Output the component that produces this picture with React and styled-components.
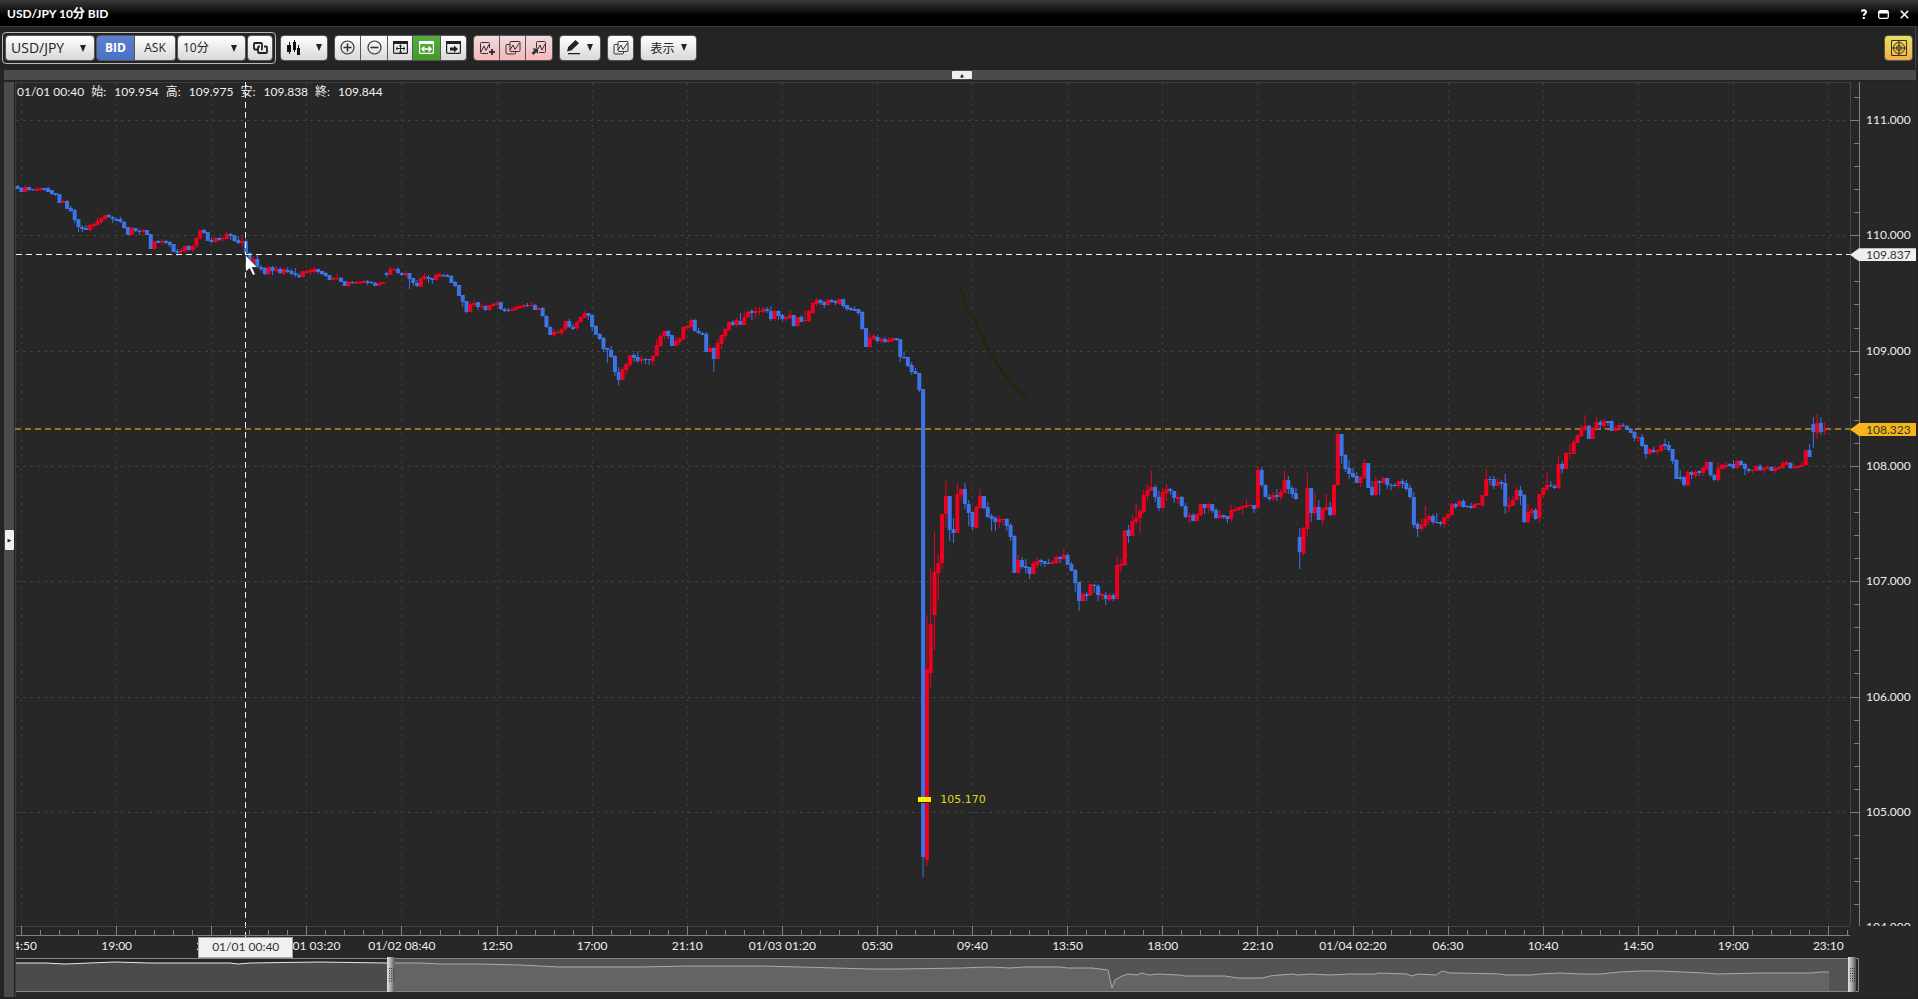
import { useState } from 'react';
import styled, { createGlobalStyle, css } from 'styled-components';

const UP = '#f00020';
const DOWN = '#3c74e8';

// chart space
const LEFT = 16;
const TOP = 82;
const WIDTH = 1834;
const HEIGHT = 844;
const FIRST_TICK = 21;
const STEP = 3.8046;
const GRID_STEP = STEP * 25;
const PRICE_TOP = 120;
const PRICE_STEP = 115.3;

// each bar: colour, high, body top, body bottom, low (counted down from y, in units of k)
const sessions = [
  {
    start: -1, y: 180, k: 1 / 3, bars: `
b15 18 26 28,b22 25 36 36,r18 20 36 36,b20 20 30 32,b26 27 31 33,r20 28 32 34,r24 25 31 33,b24 25 29 32,
b22 25 35 36,b30 31 42 44,b38 39 45 48,b42 43 69 69,r60 62 68 70,b60 62 87 88,b78 84 92 97,b88 90 120 130,
b118 118 140 155,b135 140 146 155,b136 143 150 151,r133 135 150 152,r129 132 138 145,r114 124 134 138,
r110 113 126 132,r104 106 117 120,b102 105 112 114,b108 112 118 128,b113 116 122 124,b112 117 127 130,
b124 126 145 146,b142 142 165 165,r142 143 165 165,b143 144 154 156,b146 153 157 164,r148 150 156 160,
b150 151 165 166,b162 163 207 208,r183 183 207 210,b180 183 188 190,r178 183 187 194,b181 184 190 192,
b184 187 196 200,b192 193 215 217,b208 213 218 228,r205 209 217 222,r196 198 212 220,b196 198 210 214,
r195 199 211 216,r172 173 199 204,r150 151 175 180,b148 151 160 162,b155 157 183 184,b175 180 186 188,
r170 174 186 188,b170 173 179 182,r170 173 178 182,r156 161 176 178,b160 162 168 180,b164 166 184 186,
b168 180 190 192,r168 184 190 202,b178 182 220 222,b216 220 240 262,r228 236 248 260,b225 236 262 265,
b255 260 266 272,b262 265 282 284,r258 260 282 284,b258 260 272 285,r258 267 272 276,b262 268 280 282,
r264 268 282 284,b262 269 276 278,b268 273 281 284,b264 279 286 290,b280 286 292 293,r272 273 292 293,
r270 272 278 280,r264 270 276 286,r260 266 276 278,b266 268 276 282,b272 274 283 285,b276 280 288 290,
b286 286 299 300,r290 294 300 302,r282 293 297 300,b290 294 305 306,b302 304 317 318,r303 305 317 320,
b302 305 310 312,r304 306 311 312,r302 305 310 312,r299 302 309 310,b300 303 308 314,b304 305 310 312,
b306 308 317 319,r308 310 317 319,r305 306 311 312,b275 280 285 291,r262 268 284 286,r265 267 271 272,
b262 267 280 282,b276 280 285 288,r273 278 284 290,b278 280 297 326,b294 295 310 318,b300 308 318 320,
r292 293 320 320,r278 288 296 300,b285 290 297 308,b294 295 300 312,r280 286 300 302,r280 283 290 292,
b282 284 288 292,b282 286 291 292,b284 287 308 309,b304 306 318 320,b314 315 347 347,b345 346 366 382,
b362 363 396 398,r366 372 396 397,r360 369 375 380,b366 367 380 390,r368 378 382 386,b375 377 390 392,
r374 374 390 392,r368 373 378 380,r366 370 376 378,b365 366 388 390,b385 387 392 396`,
  },
  {
    start: 128, y: 260, k: 1 / 3, bars: `
b144 149 153 156,r142 146 153 154,r138 141 149 150,r137 139 145 146,r132 135 142 146,b130 134 139 141,
r126 134 139 141,b133 135 149 150,r141 144 150 151,b141 143 169 171,b166 168 202 204,b199 201 225 226,
r208 216 225 230,r210 215 219 220,r204 207 219 225,r182 184 207 214,b178 184 202 204,b192 201 206 210,
r183 185 203 209,r168 171 186 190,r154 159 174 175,b158 160 168 179,b163 165 200 214,b194 198 224 226,
b220 222 236 240,b232 234 266 275,b264 265 270 308,b258 269 291 294,b284 289 337 347,b320 335 360 375,
r320 327 360 364,r305 312 330 345,r285 286 315 320,b280 286 294 306,b272 291 302 308,r288 296 302 312,
b294 296 300 312,b296 297 301 315,r285 287 302 314,r238 256 287 288,r222 228 258 260,r213 214 228 236,
b210 214 228 238,b225 226 257 258,r230 243 257 258,r234 235 246 254,r198 201 238 240,r195 199 204 206,
r174 180 202 208,b178 180 214 216,b204 213 218 222,b216 218 224 226,b216 222 275 277,r254 264 275 277,
b262 263 297 336,r238 249 297 298,r222 224 252 268,r204 206 228 236,r184 186 210 214,b180 186 194 198,
r174 180 194 201,b160 182 194 196,r154 170 194 196,r150 155 172 174,b148 154 159 180,r141 154 159 174,
r142 152 156 164,r141 146 156 160,b142 147 154 158,b138 152 178 182,r150 153 178 182,b150 153 167 180,
b162 165 178 182,r168 171 178 182,r150 165 174 176,b164 165 198 200,r171 171 198 202,b164 171 186 186,
r150 180 184 186,r150 154 184 186,r126 129 158 162,r114 120 132 138,b116 120 130 134,b124 126 134 144,
r118 120 136 138,b116 121 126 130,b120 124 130 134,r117 118 132 134,b116 118 138 144,b134 136 147 152,
b142 144 150 152,b138 147 152 154,b146 148 158 166,b154 156 206 210,b204 205 261 262,r220 234 261 262,
r222 228 236 240,b226 230 243 246,r232 237 243 250,b230 238 245 248,r232 240 246 248,r233 234 243 246,
b233 235 240 242,b237 238 292 307,b276 290 294 296,b290 291 317 320,b305 315 336 344,b324 332 341 342,
b338 340 389 396`,
  },
  {
    start: 237, y: 280, k: 1 / 2.529, bars: `
b275 275 1458 1511,r848 985 1467 1481,r728 870 995 1034,r637 738 846 936,r692 715 741 813,r592 592 716 731,
r508 546 592 624,b545 546 631 660,b602 630 640 665,r513 541 640 641,r529 529 543 558,b513 529 567 578,
b556 566 590 622,b586 587 625 632,r570 574 626 628,r529 546 577 578,b545 546 577 578,b561 574 600 602,
b592 598 604 634,b598 602 611 636,r597 605 612 627,r602 604 608 620,b603 604 622 634,b614 620 650 660,
b644 647 741 742,r695 709 741 743,b700 709 725 732,b706 724 728 740,b726 727 743 756,r710 716 743 744,
r702 710 721 728,b706 709 714 724,b710 711 717 726,b706 715 718 719,r708 714 718 719,r696 700 716 718,
b698 700 706 716,r678 696 706 707,b694 696 720 722,b714 718 736 737,b732 734 766 788,b763 765 813 837,
r788 795 813 814,b790 794 798 812,r769 770 797 798,b770 771 774 792,b769 773 797 812,r792 795 798 810,
b789 796 808 822,r792 796 809 812,b792 796 808 812,r701 722 808 809,r706 719 724 738,r632 635 722 724,
b619 632 647 664,r594 610 647 648,r567 601 612 619,r580 585 603 640,r532 544 587 591,r515 531 545 560,
r482 524 533 534,b518 524 549 561,b533 548 577 583,r527 537 577 578`,
  },
  {
    start: 301, y: 400, k: 1 / 3, bars: `
r252 268 278 303,b264 268 274 284,b272 273 294 309,r282 291 297 312,b288 291 318 320,b310 318 351 354,
r339 345 351 370,b339 345 363 364,r338 342 363 364,r311 312 345 347,b312 313 324 342,r310 313 324 338,
b312 313 333 338,b325 331 353 356,r330 346 354 358,b344 346 351 358,b347 349 357 368,r314 329 357 365,
r321 327 333 335,r320 322 329 333,r318 319 324 342,r298 315 321 323,r309 315 319 321,b315 316 326 340,
r199 210 325 326,b202 210 256 262,b252 255 291 292,b282 290 297 304,r276 285 297 302,b267 285 292 303,
r267 276 292 299,r210 240 279 280,b228 240 267 283,b258 264 282 294,b264 279 297 299,b384 410 457 508,
r382 384 458 468,r219 264 387 412,b263 264 339 365,r280 321 340 348,b299 321 360 361,r321 327 360 375,
r282 321 330 331,b306 321 345 348,r252 255 346 347,r93 102 256 259,b101 102 167 192,b162 165 206 216,
b180 204 222 237,b204 218 231 233,b216 228 248 250,r228 231 248 260,r176 189 234 236,b188 189 263 264,
b243 262 286 288,r231 244 286 288,b240 243 249 284,r231 234 250 251,b233 234 256 268,b249 255 259 270,
b249 255 259 261,r242 244 258 267,b237 243 252 264,b240 250 266 273,b255 264 292 297,b276 290 374 384,
b366 372 388 410,r358 375 388 394,r318 357 378 384,r342 347 360 375,b341 347 366 372,b339 365 369 370,
b363 366 372 378,r350 352 372 384,r339 342 354 362,r309 312 345 348,b310 311 321 327,r300 303 318 320,
b297 303 320 323,b315 318 322 324,b309 319 324 327,r309 312 323 324,r309 310 315 316,r285 286 314 321,
r207 236 288 289,b228 236 241 256,b228 237 258 267,r234 247 258 260,b240 245 252 267,b222 249 318 342,
r291 315 320 336,r288 299 318 319,r261 270 300 303,b258 270 287 314,b282 285 365 368,r312 335 367 368,
r324 330 338 350,b324 330 356 360`,
  },
  {
    start: 399, y: 390, k: 1 / 3, bars: `
r312 313 384 398,r291 293 315 324,r246 284 297 304,b272 284 288 292,b282 287 294 297,r198 221 294 296,
b212 221 236 250,r187 188 236 238,r162 188 192 206,r150 156 191 192,r134 136 158 160,r105 117 138 140,
r75 107 120 122,b106 107 146 147,r111 113 146 147,r80 96 116 118,b90 96 104 116,r87 94 108 118,b92 93 98 108,
b90 94 122 123,r108 114 122 124,r100 104 117 119,b99 104 109 111,b105 107 118 120,b114 117 128 130,
b124 126 144 153,r138 141 146 156,b132 141 167 170,b162 165 192 206,r174 178 192 194,b171 180 186 188,
r178 180 187 195,r162 164 182 189,b147 163 168 180,b153 166 180 185,b177 178 212 222,b207 210 266 267,
b240 262 266 273,b258 261 284 290,r240 246 284 292,b243 245 256 267,r241 247 258 264,b240 244 249 258,
r228 234 250 257,r213 215 238 243,b215 216 254 260,b252 254 270 274,r216 234 270 276,r222 224 236 238,
r216 224 230 236,b219 222 228 232,b210 221 235 238,r207 214 234 236,b210 214 226 228,b220 222 238 255,
b234 236 242 250,r237 239 243 248,r226 228 242 244,b222 229 240 243,r230 233 240 250,r226 231 236 238,
b228 230 243 244,r232 234 243 248,r229 231 236 238,r213 218 234 236,r210 217 224 226,b216 218 234 236,
r222 230 235 237,r226 228 233 234,r216 224 230 231,r180 181 226 227,b163 180 200 202,b81 102 126 174,
r72 99 129 147,b81 99 126 134,r96 118 124 136`,
  },
];

const candles = sessions.flatMap(({ start, y, k, bars }) =>
  bars.trim().split(/,\s*/).map((bar, i) => {
    const [high, top, bottom, low] = bar.slice(1).split(' ').map((v) => Math.round(y + v * k));
    return { x: FIRST_TICK + 0.4 + STEP * (start + i), color: bar[0] === 'r' ? UP : DOWN, high, top, bottom, low };
  })
);

const overview =
  '16,963 45,963 65,964 115,962 150,963 200,963 230,963 238,964 250,963 320,962 387,963 420,963 440,964 480,964 ' +
  '520,965 560,967 640,967 690,966 760,966 800,967 870,969 900,969 960,968 990,967 1010,968 1025,967 1060,967 ' +
  '1068,968 1092,968 1100,969 1108,970 1112,988 1115,980 1122,976 1128,974 1137,975 1141,973 1150,975 1157,974 ' +
  '1180,975 1185,976 1225,976 1238,978 1263,978 1270,976 1280,975 1292,974 1298,975 1310,974 1330,975 1350,974 ' +
  '1376,974 1378,973 1407,974 1412,976 1418,974 1436,975 1442,971 1450,973 1460,973 1500,974 1505,975 1530,975 ' +
  '1540,974 1560,973 1580,974 1600,974 1620,972 1640,971 1660,971 1705,973 1717,974 1760,973 1812,973 1820,972 1829,972';

const times = ['14:50', '19:00', '23:10', '01/01 03:20', '01/02 08:40', '12:50', '17:00', '21:10', '01/03 01:20', '05:30',
  '09:40', '13:50', '18:00', '22:10', '01/04 02:20', '06:30', '10:40', '14:50', '19:00', '23:10'];
const prices = ['111.000', '110.000', '109.000', '108.000', '107.000', '106.000', '105.000', '104.000'];
const readout = [['始', '109.954'], ['高', '109.975'], ['安', '109.838'], ['終', '109.844']];

const range = (n) => Array.from({ length: n }, (_, i) => i);

const App = () => {
  const [side, setSide] = useState('BID');
  const [fit, setFit] = useState('width');

  return (
    <Window>
      <GlobalStyle />
      <TitleBar>
        <Title>USD/JPY 10分 BID</Title>
        <WindowButton aria-label="Help">
          <svg width="6" height="11" viewBox="1 0 6 11" fill="none" stroke="#fff" strokeWidth="2">
            <path d="M1.5 2.6C2 .6 6 .6 6 3c0 1.700-2.200 1.600-2.200 3.800M3.800 8v2" />
          </svg>
        </WindowButton>
        <WindowButton aria-label="Maximize">
          <svg width="11" height="9" viewBox="0 0 11 9">
            <rect x=".7" y=".7" width="9.600" height="7.600" rx="1.500" fill="none" stroke="#fff" strokeWidth="1.300" />
            <path d="M1 1h9v2.500H1z" fill="#fff" />
          </svg>
        </WindowButton>
        <WindowButton aria-label="Close">
          <svg width="9" height="9" viewBox="0 0 9 9" stroke="#fff" strokeWidth="1.600"><path d="M.8.8l7.400 7.400M8.200.8L.8 8.200" /></svg>
        </WindowButton>
      </TitleBar>

      <Toolbar>
        <Linked>
          <Picker $width={90} $size={14}>
            <select aria-label="Pair"><option>USD/JPY</option></select>
          </Picker>
          <Group>
            <Tool $width={39} $tone={side === 'BID' ? 'blue' : undefined} onClick={() => setSide('BID')}>BID</Tool>
            <Tool $width={41} $tone={side === 'ASK' ? 'blue' : undefined} onClick={() => setSide('ASK')}>ASK</Tool>
          </Group>
          <Picker $width={69} $size={12}>
            <select aria-label="Period"><option>10分</option></select>
          </Picker>
          <Tool $width={26} aria-label="Link charts"><LinkIcon /></Tool>
        </Linked>
        <Tool $width={48} $gap={15} aria-label="Chart type">
          <svg width="14" height="16" viewBox="0 0 14 16" fill="#111">
            <path d="M2 2h1v12H2zM0 5h4v7H0zM7 0h1v12H7zM6 2h3v8H6zM11 5h1v9h-1zM10 8h3v7h-3z" />
          </svg>
          <Arrow />
        </Tool>
        <Group>
          <Tool $width={27} aria-label="Zoom in"><ZoomIcon plus /></Tool>
          <Tool $width={27} aria-label="Zoom out"><ZoomIcon /></Tool>
          <Tool $width={25} aria-label="Fit all" onClick={() => setFit('all')} $tone={fit === 'all' ? 'green' : undefined}>
            <FrameIcon d="M3 7.500h9M7.500 4v8M4.800 5.800L3 7.500l1.800 1.700M10.200 5.800L12 7.500l-1.800 1.700M6 5.300l1.500-1.300L9 5.300M6 10.700L7.500 12 9 10.700" />
          </Tool>
          <Tool $width={28} aria-label="Fit width" onClick={() => setFit('width')} $tone={fit === 'width' ? 'green' : undefined}>
            <FrameIcon d="M3 8h9M5.500 5.500L3 8l2.500 2.500M9.500 5.500L12 8l-2.500 2.500" bold />
          </Tool>
          <Tool $width={26} aria-label="Scroll to latest"><FrameIcon arrow /></Tool>
        </Group>
        <Group>
          <Tool $width={27} $tone="pink" aria-label="Add indicator">
            <ChartIcon><path d="M10 12h6M13 9v6" strokeWidth="2" /></ChartIcon>
          </Tool>
          <Tool $width={26} $tone="pink" aria-label="Indicator list"><StackIcon /></Tool>
          <Tool $width={27} $tone="pink" aria-label="Remove indicator">
            <svg width="16" height="16" viewBox="0 0 16 16" fill="none" stroke="#333">
              <path d="M5.500 8V2.500q0-1 1-1h7q1 0 1 1v9q0 1-1 1H8" /><path d="M7 9l2-4 2 5 3-6" />
              <path d="M1.500 8.500h5.500v5.500L5.300 12.300 2.500 15 .5 13l2.700-2.800z" fill="#333" stroke="none" />
            </svg>
          </Tool>
        </Group>
        <Tool $width={42} $gap={6} aria-label="Draw">
          <svg width="14" height="15" viewBox="0 0 14 15" fill="#222">
            <path d="M0 11.500l1.200-4.500L8.500 0 12 3.300 4.600 10.300zM1 13h12v1.200H1z" />
          </svg>
          <Arrow />
        </Tool>
        <Tool $width={27} aria-label="Templates"><StackIcon /></Tool>
        <Tool $width={57} $gap={6}>表示 <Arrow /></Tool>
        <Spacer />
        <Tool $width={29} $tone="yellow" aria-label="Crosshair">
          <svg width="16" height="16" viewBox="0 0 16 16" fill="none" stroke="#3a3216">
            <path d="M.5.5h15v15H.5zM8 0v16M0 8h16" />
            <circle cx="8" cy="8" r="5.500" /><circle cx="8" cy="8" r="2.500" />
          </svg>
        </Tool>
      </Toolbar>

      <TopRail><RailButton $wide aria-label="Collapse toolbar">▲</RailButton></TopRail>

      <Body>
        <LeftRail><RailButton aria-label="Expand side panel">▶</RailButton></LeftRail>
        <Chart>
          <Plot>
            <PlotCanvas />
            <Readout>
              <span>01/01 00:40</span>
              {readout.map(([name, value]) => (
                <ReadoutItem key={name}><dt>{name}:</dt><dd>{value}</dd></ReadoutItem>
              ))}
            </Readout>
            <Note>105.170</Note>
          </Plot>
          <PriceAxis>
            <PriceTicks />
            <PriceLabels>
              {prices.map((p) => <span key={p}>{p}</span>)}
            </PriceLabels>
            <PriceTag $top={20.4} $color="#efefef">109.837</PriceTag>
            <PriceTag $top={41.1} $color="#f4b619">108.323</PriceTag>
          </PriceAxis>
          <TimeAxis>
            <TimeTicks />
            <TimeClip>
              <TimeLabels>
                {times.map((t, i) => <span key={i}>{t}</span>)}
              </TimeLabels>
            </TimeClip>
            <TimeTag>01/01 00:40</TimeTag>
          </TimeAxis>
          <Navigator><NavigatorCanvas /></Navigator>
        </Chart>
      </Body>
    </Window>
  );
};

const PlotCanvas = () => (
  <Canvas viewBox={`${LEFT} ${TOP} ${WIDTH} ${HEIGHT}`} preserveAspectRatio="none">
    <g stroke="#414141" strokeDasharray="2 5">
      {range(20).map((i) => {
        const x = Math.round(FIRST_TICK + GRID_STEP * i) + 0.5;
        return <line key={i} x1={x} x2={x} y1={TOP + 1} y2={TOP + HEIGHT} />;
      })}
      {range(7).map((i) => {
        const y = Math.round(PRICE_TOP + PRICE_STEP * i) + 0.5;
        return <line key={i} x1={LEFT} x2={LEFT + WIDTH} y1={y} y2={y} strokeDasharray="3 4" />;
      })}
    </g>
    <line x1="15" x2="1850" y1="429" y2="429" stroke="#9a731b" strokeWidth="2" strokeDasharray="6 4" />
    {candles.map((c, i) => (
      <g key={i} fill={c.color}>
        <rect x={c.x - 0.5} y={c.high} width="1" height={c.low - c.high} />
        <rect x={c.x - 2} y={c.top} width="4" height={Math.max(c.bottom - c.top, 1)} />
      </g>
    ))}
    <path d="M960 287l4 11 3 12 8 10 13 29 12 20 13 16 13 13" fill="none" stroke="#262500" strokeWidth="2" />
    <path d="M913 802h25" stroke="#2a2800" strokeWidth="2" />
    <rect x="918" y="797" width="13" height="5" fill="#ffee00" />
    <g stroke="#f2f2f2" strokeDasharray="6 4">
      <line x1="16" x2="1850" y1="254.500" y2="254.500" />
      <line x1="245.500" x2="245.500" y1="82" y2="937" />
    </g>
    <path d="M245.500 255v17l4-3.500 3.500 7 2.500-1.200-3.200-6.800h5.500z" fill="#fff" stroke="#111" strokeWidth=".7" />
  </Canvas>
);

const PriceTicks = () => (
  <PriceTickCanvas viewBox={`0 ${TOP} 10 ${HEIGHT}`} preserveAspectRatio="none">
    <path d="M.5 82v844" stroke="#444" />
    <path d="M9.500 82v844" stroke="#808080" />
    {range(36).map((i) => {
      const y = Math.round(PRICE_TOP + (PRICE_STEP / 5) * (i - 1)) + 0.5;
      return <path key={i} d={`M${(i - 1) % 5 ? 4 : 0} ${y}H9`} stroke="#808080" />;
    })}
  </PriceTickCanvas>
);

const TimeTicks = () => (
  <TimeTickCanvas viewBox={`${LEFT} 926 ${WIDTH} 10`} preserveAspectRatio="none">
    <path d="M15 926.500h1835" stroke="#444" />
    <path d="M15 935.500h1835" stroke="#808080" />
    {range(97).map((i) => {
      const x = Math.round(FIRST_TICK + (GRID_STEP / 5) * i) + 0.5;
      return <path key={i} d={`M${x} ${i % 5 ? 930 : 926}V935`} stroke="#808080" />;
    })}
  </TimeTickCanvas>
);

const Handle = ({ x }) => (
  <g>
    <rect x={x} y="957" width="8" height="35" fill="url(#grip)" />
    {range(6).map((i) => (
      <path key={i} d={`M${x + 2} ${968.5 + i * 2.5}h5`} stroke="#333" strokeDasharray="1 1" />
    ))}
  </g>
);

const NavigatorCanvas = () => (
  <Canvas viewBox="16 957 1843 36" preserveAspectRatio="none">
    <defs>
      <linearGradient id="grip">
        <stop offset="0" stopColor="#e2e2e2" /><stop offset=".45" stopColor="#aaa" /><stop offset="1" stopColor="#555" />
      </linearGradient>
    </defs>
    <polygon points={`16,992 ${overview} 1829,992`} fill="#4b4b4b" />
    <polyline points={overview} fill="none" stroke="#e8e8e8" />
    <rect x="387" y="958" width="1468" height="34" fill="#545454" />
    <svg x="387" y="957" width="1468" height="36" viewBox="387 957 1468 36">
      <polygon points={`16,992 ${overview} 1829,992`} fill="#646464" />
      <polyline points={overview} fill="none" stroke="#aaa" />
    </svg>
    <path d="M16 958.500H1858.500V991.500H16" fill="none" stroke="#858585" />
    <Handle x={387} />
    <Handle x={1848} />
  </Canvas>
);

const LinkIcon = () => (
  <svg width="15" height="12" viewBox="0 0 15 12" fill="none" stroke="#222" strokeWidth="1.800">
    <path d="M5 7.500H2q-1 0-1-1V2q0-1 1-1h6q1 0 1 1v4.500q0 1-1 1H8" />
    <path d="M7 4.500H6q-1 0-1 1V10q0 1 1 1h7q1 0 1-1V5.500q0-1-1-1h-2" />
  </svg>
);

const ZoomIcon = ({ plus }) => (
  <svg width="15" height="15" viewBox="0 0 15 15" fill="none" stroke="#333" strokeWidth="1.200">
    <circle cx="7.500" cy="7.500" r="6.500" />
    <path d={plus ? 'M3.500 7.500h8M7.500 3.500v8' : 'M3.500 7.500h8'} strokeWidth="1.600" />
  </svg>
);

const FrameIcon = ({ d, bold, arrow }) => (
  <svg width="15" height="13" viewBox="0 0 15 13" fill="none" stroke="currentColor">
    <rect x=".6" y=".6" width="13.800" height="11.800" rx="1" strokeWidth="1.200" />
    <path d="M0 0h15v3H0z" fill="currentColor" stroke="none" />
    {arrow ? <path d="M4 6.500h4V4.500L12 8l-4 3.500v-2H4z" fill="currentColor" stroke="none" /> : <path d={d} strokeWidth={bold ? 1.5 : 1} />}
  </svg>
);

const ChartIcon = ({ children }) => (
  <svg width="16" height="16" viewBox="0 0 16 16" fill="none" stroke="#333">
    <path d="M9 13.500H2.500q-1 0-1-1v-9q0-1 1-1h7q1 0 1 1V8" />
    <path d="M2 12l3-6 2 4.500 3-6" />
    {children}
  </svg>
);

const StackIcon = () => (
  <svg width="16" height="15" viewBox="0 0 16 15" fill="none" stroke="#333">
    <path d="M5 4.500H2q-1 0-1 1V13q0 1 1 1h7.500q1 0 1-1v-1" />
    <rect x="5" y="1.500" width="10" height="10" rx="1" />
    <path d="M5 10l3-5 2 4.500L14.500 3" />
  </svg>
);

const GlobalStyle = createGlobalStyle`
  * { box-sizing: border-box; }
  body {
    margin: 0;
    background: #242424;
    color: #eee;
    font-family: Lato, "Noto Sans CJK JP", sans-serif;
    font-size: 12px;
  }
`;

const Window = styled.div`
  display: flex;
  flex-direction: column;
  height: 100vh;
  min-height: 400px;
  overflow: hidden;
`;

const TitleBar = styled.header`
  display: flex;
  align-items: center;
  gap: 11px;
  height: 26px;
  padding: 2px 9px 0 7px;
  background: linear-gradient(#383838, #000 16px);
`;

const Title = styled.h1`
  flex: 1;
  margin: 0;
  font: 700 12px/16px Lato, "Noto Sans CJK JP", sans-serif;
  color: #fff;
`;

const WindowButton = styled.button`
  display: flex;
  padding: 0;
  border: 0;
  background: none;
`;

const Toolbar = styled.div`
  display: flex;
  align-items: center;
  gap: 6px;
  height: 42px;
  margin-right: 2px;
  padding: 0 2px 0 2px;
  border-top: 1px solid #383838;
  border-right: 1px solid #444;
`;

const Linked = styled.div`
  display: flex;
  gap: 1px;
  height: 32px;
  margin-right: -2px;
  padding: 2px;
  border: 1px solid #b8b8b8;
  border-radius: 4px;
`;

const face = css`
  height: 26px;
  border: 1px solid #555;
  border-radius: 4px;
  background: linear-gradient(#fff, #d8d8d8);
  color: #222;
  font-family: "Open Sans", "Noto Sans CJK JP", sans-serif;
`;

const tones = {
  blue: 'background: linear-gradient(#5c80cc, #4a70c4); color: #fff; font-weight: 700;',
  green: 'background: linear-gradient(#55ad40, #41992c); color: #fff;',
  pink: 'background: linear-gradient(#efdcdc, #f5b6bc);',
  yellow: 'background: linear-gradient(#e8e060, #f2ae48);',
};

const Tool = styled.button`
  ${face}
  display: inline-flex;
  align-items: center;
  justify-content: center;
  gap: ${(p) => p.$gap || 0}px;
  flex: none;
  width: ${(p) => p.$width}px;
  padding: 0;
  font-size: 12px;
  white-space: nowrap;
  ${(p) => tones[p.$tone]}
`;

const Group = styled.div`
  display: flex;

  ${Tool}:not(:first-child) { border-top-left-radius: 0; border-bottom-left-radius: 0; border-left-width: 0; }
  ${Tool}:not(:last-child) { border-top-right-radius: 0; border-bottom-right-radius: 0; }
`;

const Picker = styled.label`
  position: relative;

  select {
    ${face}
    appearance: none;
    width: ${(p) => p.$width}px;
    padding: 0 0 0 5px;
    font-size: ${(p) => p.$size}px;
  }

  &::after {
    content: '';
    position: absolute;
    top: 10px;
    right: 9px;
    border: solid transparent;
    border-width: 7px 3px 0;
    border-top-color: #222;
    pointer-events: none;
  }
`;

const Arrow = styled.i`
  border: solid transparent;
  border-width: 7px 3px 0;
  border-top-color: #222;
`;

const Spacer = styled.div`
  flex: 1;
`;

const TopRail = styled.div`
  display: flex;
  align-items: center;
  justify-content: center;
  height: 10px;
  margin: 2px 2px 2px 4px;
  padding-left: 4px;
  background: #4b4b4b;
`;

const RailButton = styled.button`
  display: flex;
  align-items: center;
  justify-content: center;
  width: ${(p) => (p.$wide ? 20 : 9)}px;
  height: ${(p) => (p.$wide ? 8 : 20)}px;
  padding: 0;
  border: 0;
  border-radius: 1px;
  background: #f0f0f0;
  color: #222;
  font: 5px "DejaVu Sans", sans-serif;
`;

const Body = styled.main`
  display: flex;
  flex: 1;
  gap: 1px;
  min-height: 0;
  padding: 0 2px 2px 4px;
`;

const LeftRail = styled.div`
  display: flex;
  align-items: center;
  justify-content: flex-end;
  width: 10px;
  background: #4b4b4b;
`;

const Chart = styled.section`
  display: grid;
  flex: 1;
  grid-template: minmax(0, 1fr) 31px 36px / minmax(0, 1fr) 66px;
  min-width: 0;
  padding-bottom: 4px;
  border-left: 1px solid #3c3c3c;
  background: #272727;
`;

const Canvas = styled.svg`
  display: block;
  width: 100%;
  height: 100%;
`;

const Plot = styled.div`
  position: relative;
  min-height: 0;
  box-shadow: inset 0 1px #3c3c3c;

  ${Canvas} { overflow: visible; }
`;

const Readout = styled.dl`
  position: absolute;
  top: 2px;
  left: 1px;
  display: flex;
  gap: 7px;
  margin: 0;
  line-height: 16px;
`;

const ReadoutItem = styled.div`
  display: flex;
  gap: 8px;

  dd { margin: 0; }
`;

const Note = styled.div`
  position: absolute;
  top: 84.8%;
  left: 50.4%;
  margin-top: -6px;
  color: #dfd81c;
  font: 11px/16px "DejaVu Sans", sans-serif;
`;

const PriceAxis = styled.div`
  position: relative;
  display: flex;
  min-height: 0;
`;

const PriceTickCanvas = styled.svg`
  flex: none;
  width: 10px;
  height: 100%;
`;

const PriceLabels = styled.div`
  display: flex;
  flex-direction: column;
  flex: 1;
  overflow: hidden;
  padding-left: 6px;

  span {
    display: flex;
    flex: 0 0 13.66%;
    align-items: center;
  }
  span:first-child { margin-top: -20px; }
`;

const PriceTag = styled.output`
  position: absolute;
  top: ${(p) => p.$top}%;
  left: 0;
  right: 0;
  height: 13px;
  margin-top: -6px;
  padding-left: 16px;
  background: ${(p) => p.$color};
  clip-path: polygon(0 50%, 9px 0, 100% 0, 100% 100%, 9px 100%);
  color: #333;
  line-height: 13px;
`;

const TimeAxis = styled.div`
  position: relative;
  grid-column: 1;
`;

const TimeTickCanvas = styled.svg`
  display: block;
  width: 100%;
  height: 10px;
`;

const TimeClip = styled.div`
  overflow: hidden;
`;

const TimeLabels = styled.div`
  display: flex;
  margin: 0 -26px 0 -42px;

  span {
    flex: 1 0 0;
    width: 0;
    line-height: 20px;
    text-align: center;
    white-space: nowrap;
  }
`;

const TimeTag = styled.output`
  position: absolute;
  top: 11px;
  left: 12.5%;
  width: 95px;
  height: 21px;
  margin-left: -47px;
  border: 1px solid #aaa;
  background: #f0f0f0;
  color: #333;
  line-height: 18px;
  text-align: center;
`;

const Navigator = styled.div`
  grid-column: 1 / -1;
  margin-right: 57px;
`;

export default App;
